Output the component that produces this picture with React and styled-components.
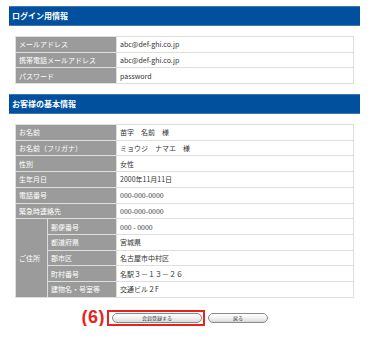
import React from "react";
import styled, { createGlobalStyle } from "styled-components";

const Global = createGlobalStyle`
  html, body { margin: 0; padding: 0; background: #fff; }
  body { font-family: "Noto Sans CJK JP", "Noto Sans", sans-serif; }
`;

const Page = styled.div`
  width: 351px;
  padding: 6px 0 0 9px;
`;

const SectionHeader = styled.div`
  height: 20px;
  box-sizing: border-box;
  background: #00509e;
  border-top: 1px solid #3f78b8;
  border-bottom: 1px solid #3f78b8;
  color: #fff;
  font-size: 8px;
  font-weight: bold;
  line-height: 18px;
  padding-left: 3px;
  margin-top: ${(p) => (p.$first ? "0" : "10px")};
`;

const Table = styled.table`
  margin: 10px 6px 0 6px;
  width: 339px;
  border-collapse: separate;
  border-spacing: 1px;
  background: #dedede;
  font-size: 7px;
  table-layout: fixed;
`;

const Label = styled.th`
  background: #9b9b9b;
  color: #fff;
  font-weight: normal;
  text-align: left;
  padding: 0 0 0 3px;
  height: 14.7px;
  line-height: 14px;
  white-space: nowrap;
  overflow: hidden;
  vertical-align: middle;
`;

const Value = styled.td`
  background: #fff;
  color: #333;
  padding: 0 0 0 3px;
  height: 14.7px;
  line-height: 14px;
  white-space: nowrap;
  vertical-align: middle;
`;

const Actions = styled.div`
  display: flex;
  justify-content: center;
  align-items: center;
  gap: 3px;
  margin-top: 12px;
  padding-left: 6px;
`;

const Highlight = styled.div`
  position: relative;
  border: 2px solid #e8231c;
  padding: 1px 1px 1px 3px;
  display: flex;
`;

const Marker = styled.span`
  position: absolute;
  right: calc(100% + 4px);
  top: 50%;
  transform: translateY(-54%);
  color: #e8231c;
  font-family: "Liberation Sans", Arial, sans-serif;
  font-weight: bold;
  font-size: 18px;
  letter-spacing: 0.5px;
  white-space: nowrap;
`;

const PillButton = styled.button`
  width: ${(p) => p.$w}px;
  height: 10px;
  box-sizing: border-box;
  border: 1px solid #8a8a8a;
  border-radius: 6px;
  background: linear-gradient(#ffffff, #f2f2f2 50%, #d9d9d9);
  color: #333;
  font-family: "Noto Sans CJK JP", sans-serif;
  font-size: 5px;
  line-height: 8px;
  padding: 0;
  display: flex;
  align-items: center;
  justify-content: center;
`;

const login = [
  ["メールアドレス", "abc@def-ghi.co.jp"],
  ["携帯電話メールアドレス", "abc@def-ghi.co.jp"],
  ["パスワード", "password"],
];

const basic = [
  ["お名前", "苗字　名前　様"],
  ["お名前（フリガナ）", "ミョウジ　ナマエ　様"],
  ["性別", "女性"],
  ["生年月日", "2000年11月11日"],
  ["電話番号", "000-000-0000"],
  ["緊急時連絡先", "000-000-0000"],
];

const address = [
  ["郵便番号", "000 - 0000"],
  ["都道府県", "宮城県"],
  ["郡市区", "名古屋市中村区"],
  ["町村番号", "名駅３－１３－２６"],
  ["建物名・号室等", "交通ビル２F"],
];

export default function App() {
  return (
    <Page>
      <Global />
      <SectionHeader $first>ログイン用情報</SectionHeader>
      <Table>
        <colgroup>
          <col style={{ width: 31 }} />
          <col style={{ width: 68 }} />
          <col />
        </colgroup>
        <tbody>
          {login.map(([k, v]) => (
            <tr key={k}>
              <Label colSpan={2}>{k}</Label>
              <Value>{v}</Value>
            </tr>
          ))}
        </tbody>
      </Table>

      <SectionHeader>お客様の基本情報</SectionHeader>
      <Table>
        <colgroup>
          <col style={{ width: 31 }} />
          <col style={{ width: 68 }} />
          <col />
        </colgroup>
        <tbody>
          {basic.map(([k, v]) => (
            <tr key={k}>
              <Label colSpan={2}>{k}</Label>
              <Value>{v}</Value>
            </tr>
          ))}
          {address.map(([k, v], i) => (
            <tr key={k}>
              {i === 0 && <Label rowSpan={5}>ご住所</Label>}
              <Label>{k}</Label>
              <Value>{v}</Value>
            </tr>
          ))}
        </tbody>
      </Table>

      <Actions>
        <Highlight>
          <Marker>(6)</Marker>
          <PillButton $w={90}>会員登録する</PillButton>
        </Highlight>
        <PillButton $w={60}>戻る</PillButton>
      </Actions>
    </Page>
  );
}
